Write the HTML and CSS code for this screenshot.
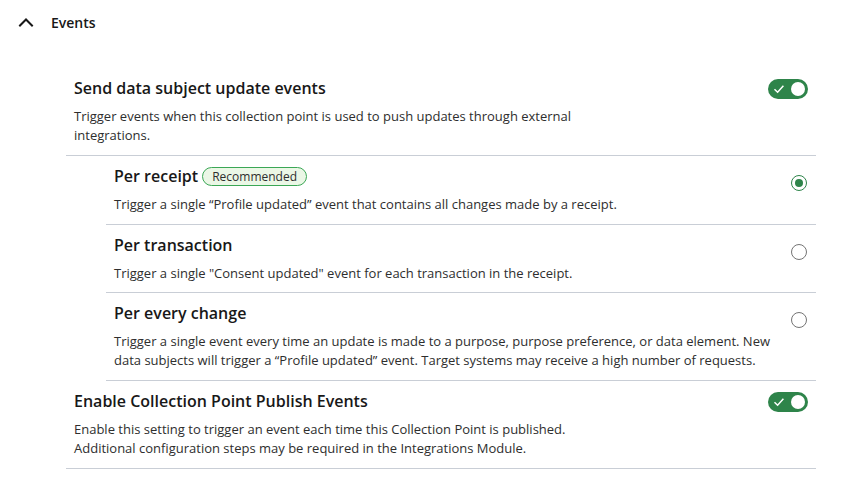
FILE: index.html
```html
<!DOCTYPE html>
<html lang="en">

<head>
    <meta charset="UTF-8">
    <meta name="viewport" content="width=device-width, initial-scale=1.0">
    <title>Events</title>
    <link rel="stylesheet" href="styles.css">
</head>

<body>

    <div class="accordion-header">
        <svg class="chevron" width="16" height="16" viewBox="0 0 16 16">
            <path d="M2 11.5 L8 5.5 L14 11.5" fill="none" stroke="#181818" stroke-width="2" stroke-linecap="square" />
        </svg>
        <span class="accordion-title">Events</span>
    </div>

    <div class="events">
        <div class="setting">
            <div class="setting-text">
                <div class="title">Send data subject update events</div>
                <div class="desc desc-narrow">Trigger events when this collection point is used to push updates through external integrations.</div>
            </div>
            <div class="toggle on">
                <svg class="check" width="12" height="12" viewBox="0 0 12 12">
                    <path d="M1.5 6.3 L4.6 9.2 L10.4 2.8" fill="none" stroke="#fff" stroke-width="1.5" />
                </svg>
                <span class="knob"></span>
            </div>
        </div>

        <div class="options">
            <div class="option">
                <div class="option-text">
                    <div class="title">Per receipt <span class="badge">Recommended</span></div>
                    <div class="desc">Trigger a single “Profile updated” event that contains all changes made by a receipt.</div>
                </div>
                <span class="radio checked"></span>
            </div>
            <div class="option">
                <div class="option-text">
                    <div class="title">Per transaction</div>
                    <div class="desc">Trigger a single "Consent updated" event for each transaction in the receipt.</div>
                </div>
                <span class="radio"></span>
            </div>
            <div class="option">
                <div class="option-text">
                    <div class="title">Per every change</div>
                    <div class="desc">Trigger a single event every time an update is made to a purpose, purpose preference, or data element. New data subjects will trigger a “Profile updated” event. Target systems may receive a high number of requests.</div>
                </div>
                <span class="radio"></span>
            </div>
        </div>

        <div class="setting">
            <div class="setting-text">
                <div class="title">Enable Collection Point Publish Events</div>
                <div class="desc">Enable this setting to trigger an event each time this Collection Point is published.<br>Additional configuration steps may be required in the Integrations Module.</div>
            </div>
            <div class="toggle on">
                <svg class="check" width="12" height="12" viewBox="0 0 12 12">
                    <path d="M1.5 6.3 L4.6 9.2 L10.4 2.8" fill="none" stroke="#fff" stroke-width="1.5" />
                </svg>
                <span class="knob"></span>
            </div>
        </div>
    </div>

</body>

</html>
```

FILE: styles.css
```css
body {
    font-family: "Open Sans", Arial, sans-serif;
    background-color: #ffffff;
    color: #181818;
    margin: 0;
}

.accordion-header {
    display: flex;
    align-items: center;
    height: 44px;
    padding-left: 18px;
}

.chevron {
    margin-right: 17px;
}

.accordion-title {
    font-size: 14px;
    font-weight: 600;
}

.events {
    margin: 24px 0 0 66px;
    width: 750px;
}

.setting {
    display: flex;
    justify-content: space-between;
    align-items: flex-start;
    padding: 8px 8px 10px 8px;
    border-bottom: 1px solid #c9ced6;
}

.title {
    font-size: 16px;
    font-weight: 600;
    line-height: 24px;
    display: flex;
    align-items: center;
}

.desc {
    font-size: 13px;
    line-height: 19px;
    color: #2e2e2e;
    margin-top: 7px;
}

.desc-narrow {
    max-width: 500px;
}

.toggle {
    width: 40px;
    height: 20px;
    border-radius: 10px;
    background-color: #2e844a;
    display: flex;
    align-items: center;
    justify-content: space-between;
    padding: 0 3px 0 5px;
    box-sizing: border-box;
    margin-top: 3px;
}

.knob {
    width: 14px;
    height: 14px;
    border-radius: 50%;
    background-color: #ffffff;
}

.options {
    margin-left: 40px;
}

.option {
    display: flex;
    justify-content: space-between;
    align-items: flex-start;
    padding: 8px 9px 9.5px 8px;
    border-bottom: 1px solid #c9ced6;
}

.option-text {
    max-width: 660px;
}

.badge {
    font-size: 12px;
    font-weight: 400;
    line-height: 17px;
    padding: 0 9px;
    margin-left: 4px;
    border: 1px solid #3ba755;
    border-radius: 10px;
    background-color: #ebf7e6;
    color: #2e2e2e;
}

.radio {
    width: 16px;
    height: 16px;
    border: 1px solid #747474;
    border-radius: 50%;
    box-sizing: border-box;
    margin-top: 11px;
    flex-shrink: 0;
}

.radio.checked {
    border-color: #2e844a;
    display: flex;
    align-items: center;
    justify-content: center;
}

.radio.checked::after {
    content: "";
    width: 8px;
    height: 8px;
    border-radius: 50%;
    background-color: #2e844a;
}
```
